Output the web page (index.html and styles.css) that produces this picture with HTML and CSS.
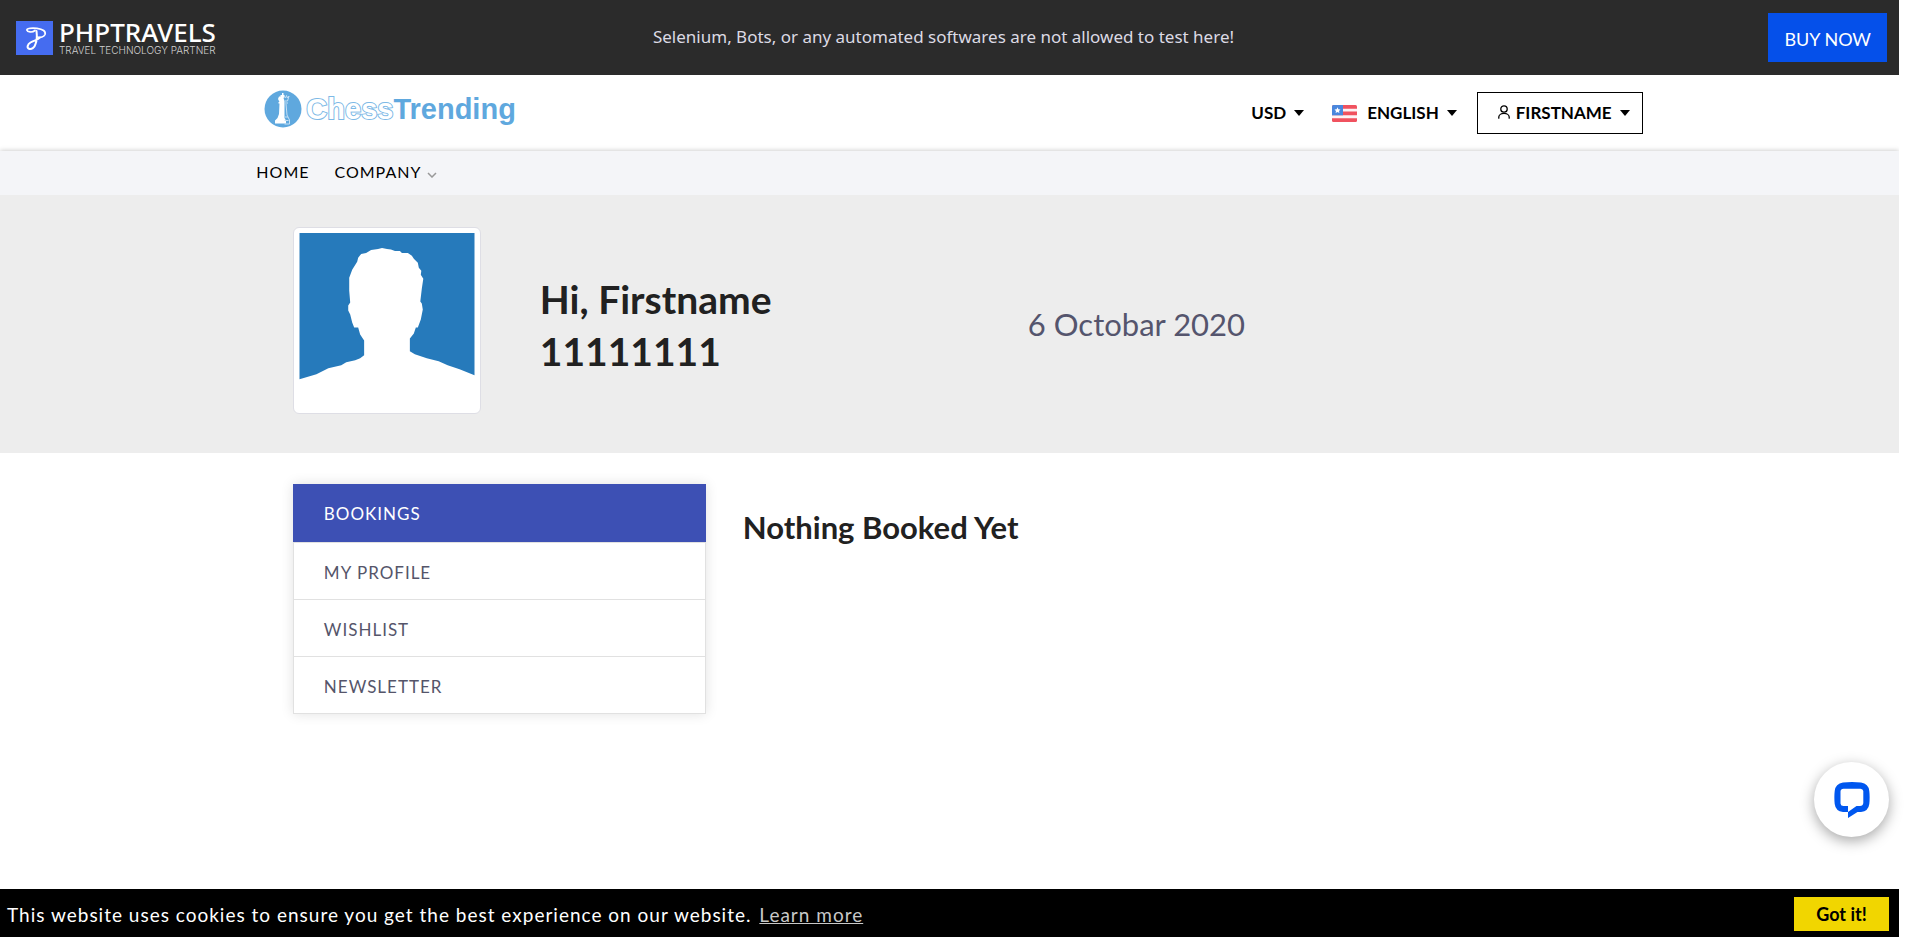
FILE: index.html
```html
<!DOCTYPE html>
<html lang="en">
<head>
<meta charset="utf-8">
<title>My Account - ChessTrending</title>
<link rel="stylesheet" href="styles.css">
</head>
<body>
<div class="page">
  <div class="promo">
    <a class="promo-logo" href="#">
      <svg class="promo-mark" viewBox="0 0 37 34" aria-hidden="true">
        <rect width="37" height="34" fill="#456cf0"/>
        <g fill="none" stroke="#fff" stroke-linecap="round" stroke-linejoin="round">
          <path d="M19 9.500C16 12 11.500 11 10.800 9C11 6.500 17 7 21 7.300C27 8 30 10.500 29 13.500C28 16 24.500 17 21.500 16" stroke-width="1.700"/>
          <path d="M20.500 10C21 14 21.500 18 19.500 23C18.500 27 15.500 28.500 13 27.800C10.500 26.500 11.500 23.500 14.500 21.500C18 19.500 22 19 24 16.500" stroke-width="2"/>
        </g>
      </svg>
      <span class="promo-words"><span class="promo-name">PHPTRAVELS</span><span class="promo-tag">TRAVEL TECHNOLOGY PARTNER</span></span>
    </a>
    <p class="promo-text">Selenium, Bots, or any automated softwares are not allowed to test here!</p>
    <a class="buy" href="#">BUY NOW</a>
  </div>

  <header class="header wide">
    <a class="brand" href="#">
      <svg class="brand-mark" viewBox="0 0 38 38" aria-hidden="true">
        <circle cx="19" cy="19" r="18.500" fill="#5fa8de"/>
        <path d="M15 6.500h1.500v-1.500h1.500v-2h1.500v2h1v2l-1 1 1 3v17l1.500 2.500v3h-11v-3l2.500-2.500 1.500-4 .5-10.500h-1v-1.500h1l-1.500-3z" fill="#fff"/>
        <path d="M20 6l1.500 2 1-2.500 1 2.500 1.500-2-1.500 5h-2.500M21 13h3M22 14l1 11 2.500 5v4h-5M21 27h3M20.500 30.500h4" fill="none" stroke="#c4e0f5" stroke-width="1"/>
      </svg>
      <span class="brand-chess">Chess</span><span class="brand-trending">Trending</span>
    </a>
    <div class="tools">
      <button class="tool" type="button">USD<span class="caret"></span></button>
      <button class="tool" type="button">
        <svg class="flag" viewBox="0 0 25 17" aria-hidden="true">
          <clipPath id="f"><rect width="25" height="17" rx="1.500"/></clipPath>
          <g clip-path="url(#f)">
            <rect width="25" height="17" fill="#fdf3f4"/>
            <path d="M0 1.800h25M0 8.300h25M0 15.200h25" stroke="#f0525f" stroke-width="3.800"/>
            <rect width="11" height="10.300" fill="#4a87dd"/>
            <path d="M5.500 2.300l.9 1.900 2.100.3-1.500 1.500.4 2.100-1.900-1-1.900 1 .4-2.100-1.500-1.500 2.100-.3z" fill="#fff"/>
          </g>
        </svg>ENGLISH<span class="caret"></span></button>
      <button class="tool account" type="button">
        <svg class="user" viewBox="0 0 12 14" aria-hidden="true"><g fill="none" stroke="#000" stroke-width="1.300" stroke-linecap="round"><circle cx="6" cy="4" r="3.200"/><path d="M.8 13.200V12a5.200 3.600 0 0 1 10.400 0v1.200"/></g></svg>FIRSTNAME<span class="caret"></span></button>
    </div>
  </header>

  <nav class="nav">
    <div class="nav-row wide">
      <a href="#">HOME</a>
      <a href="#">COMPANY<svg class="chev" viewBox="0 0 10 6" aria-hidden="true"><path d="M1 1l4 4 4-4" fill="none" stroke="#999" stroke-width="1.500"/></svg></a>
    </div>
  </nav>

  <section class="hero">
    <div class="hero-row narrow">
      <svg class="avatar" viewBox="0 0 176 176" role="img" aria-label="Profile photo">
        <rect width="176" height="176" fill="#fff"/>
        <path fill="#267abb" d="M0 0H176V143L161 137L149 133L140 129L128 126L116 122L111 119V106L115 101L117 95H119L122 87L124 77L123 71L121.500 69L123 56L124.500 46L122 42L122.500 38L120 35L119 30L115 26L113 23L109 20L103 20L101 18L96 18L92 16.500L88 16L83 15L79 16L72 17L67 20L62 21L59 25L58 29L53 37L50 45L50 58L51 70L49 73L49 78L51 82L53 90L55 95H59L61 102L65 108V123L61 126L56 128L47 130L42 133L29 136L17 142L0 147Z"/>
      </svg>
      <h1 class="hello">Hi, Firstname<br>11111111</h1>
      <p class="date">6 Octobar 2020</p>
    </div>
  </section>

  <main class="main narrow">
    <ul class="menu">
      <li><a class="active" href="#">BOOKINGS</a></li>
      <li><a href="#">MY PROFILE</a></li>
      <li><a href="#">WISHLIST</a></li>
      <li><a href="#">NEWSLETTER</a></li>
    </ul>
    <h2 class="empty">Nothing Booked Yet</h2>
  </main>
</div>

<div class="bottom">
  <button class="chat" type="button" aria-label="Open chat">
    <svg viewBox="0 0 36 36" aria-hidden="true"><path fill="#0057ef" fill-rule="evenodd" d="M9 .5Q18-.5 27 .5Q34.500 1.500 35.300 9Q36 15 35.300 22Q34.500 29 27 30H23.500L14 36V30H9Q1.500 29 .7 22Q0 15 .7 9Q1.500 1.500 9 .5ZM9.500 6.800Q6.700 7 6.500 9.500V21.500Q6.800 24 9.500 24H14V30L22.500 24H26Q29 24 29.300 21V9Q29 7 26.500 6.800Z"/></svg>
  </button>
  <div class="cookies">
    <p class="cookie-text">This website uses cookies to ensure you get the best experience on our website. <a href="#">Learn more</a></p>
    <button class="got" type="button">Got it!</button>
  </div>
</div>
</body>
</html>
```
FILE: styles.css
```css
* { box-sizing: border-box; }

body {
  margin: 0 21px 0 0;
  font-family: Lato, "Noto Sans", sans-serif;
  font-size: 17px;
  color: #212121;
  background: #fff;
}

h1, h2, p, ul { margin: 0; padding: 0; }
a { color: inherit; text-decoration: none; }
button { font: inherit; color: inherit; border: 0; background: none; cursor: pointer; }

.wide { width: 73%; margin: 0 auto; }
.narrow { width: calc(69% + 3px); margin: 0 auto; }

/* promo bar */
.promo {
  display: grid;
  grid-template-columns: 1fr auto 1fr;
  align-items: center;
  height: 75px;
  padding: 0 12px 0 16px;
  background: #2b2b2b;
}
.promo-logo { display: flex; align-items: center; gap: 6px; color: #fff; }
.promo-mark { width: 37px; height: 34px; }
.promo-words { display: flex; flex-direction: column; }
.promo-name { font: 500 26px/24px "Noto Sans", sans-serif; }
.promo-tag { font: 300 10px/12px Inter, sans-serif; color: #d0d0d0; }
.promo-text { padding-bottom: 2px; margin-right: 16px; font: 17px/24px "Noto Sans", sans-serif; color: #dcdae4; }
.buy {
  justify-self: end;
  padding: 14px 16px 11px;
  font-size: 18px;
  line-height: 24px;
  color: #fff;
  background: #0550ea;
}

/* header */
.header { display: flex; align-items: center; justify-content: space-between; height: 76px; }
.brand { display: flex; align-items: center; padding: 0 0 8px 8px; font: bold 29px/38px "Liberation Sans", sans-serif; }
.brand-mark { width: 38px; height: 38px; margin-right: 4px; }
.brand-chess { color: #fff; -webkit-text-stroke: 2px #7db9e6; paint-order: stroke fill; }
.brand-trending { color: #5fa8de; }
.tools { display: flex; align-items: center; font-weight: 700; color: #000; }
.tool { display: flex; align-items: center; padding: 0; margin-right: 28px; line-height: 24px; }
.tool + .tool { margin-right: 20px; }
.tool.account.account { height: 42px; padding: 0 12px 0 20px; margin-right: 0; border: 1px solid #000; }
.caret { margin-left: 8px; border: 5px solid transparent; border-top: 6px solid #000; border-bottom: 0; }
.flag { width: 25px; height: 17px; margin-right: 10px; }
.user { width: 12px; height: 14px; margin: 0 6px 3px 0; }

/* navigation */
.nav { position: relative; background: #f4f5f8; box-shadow: 0 0 5px rgba(0, 0, 0, .25); clip-path: inset(-6px -8px 0 0); }
.nav-row { display: flex; gap: 25px; line-height: 24px; padding: 9px 0 11px; font-size: 16px; letter-spacing: 1px; color: #000; }
.chev { width: 10px; height: 6px; margin-left: 6px; }

/* greeting */
.hero { background: #ededed; }
.hero-row {
  display: grid;
  grid-template-columns: 247px 488px 1fr;
  align-items: center;
  padding: 32px 0 39px;
}
.avatar { width: 188px; height: 187px; padding: 5px; background: #fff; border: 1px solid #dedee5; border-radius: 6px; }
.hello { padding-top: 8px; font-size: 39px; line-height: 52px; }
.date { padding-top: 6px; font-size: 31px; line-height: 40px; color: #55556d; }

/* account area */
.main { display: flex; align-items: flex-start; gap: 37px; padding: 31px 0; }
.menu { width: 413px; list-style: none; border: 1px solid #e1e1e1; border-top: 0; background: #fff; box-shadow: 0 0 12px rgba(0, 0, 0, .12); }
.menu a { display: block; padding: 18px 30px 14px; line-height: 24px; letter-spacing: 1px; color: #55556a; }
.menu li + li { border-top: 1px solid #e1e1e1; }
.menu .active { margin: 0 -1px; padding: 18px 31px 16px; color: #fff; background: #3d50b4; }
.empty { padding-top: 23px; font-size: 31px; line-height: 40px; }

/* pinned to the window's bottom */
.bottom { position: fixed; left: 0; right: 21px; bottom: 0; display: flex; flex-direction: column; align-items: flex-end; gap: 52px; }
.chat {
  display: grid;
  place-items: center;
  width: 75px;
  height: 75px;
  margin-right: 10px;
  border-radius: 50%;
  background: #fff;
  box-shadow: 0 4px 14px rgba(0, 0, 0, .35);
}
.chat svg { width: 36px; height: 36px; }
.cookies { display: flex; align-items: center; justify-content: space-between; align-self: stretch; height: 48px; padding: 1px 10px 0 7px; color: #fff; background: #000; }
.cookie-text { padding-top: 3px; font-size: 19px; line-height: 24px; letter-spacing: 1px; }
.cookie-text a { margin-left: 2px; color: #c8c8c8; text-decoration: underline; }
.got { width: 95px; height: 34px; padding: 0; font-size: 18px; font-weight: 700; color: #000; background: #f1d600; }
```
